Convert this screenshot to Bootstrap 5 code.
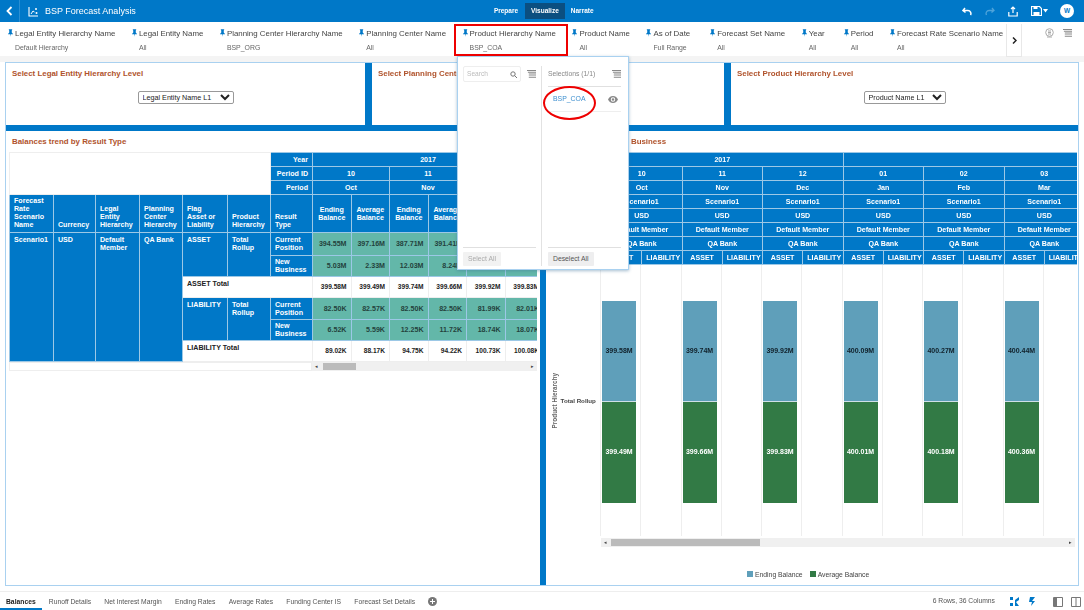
<!DOCTYPE html>
<html lang="en"><head><meta charset="utf-8"><title>BSP Forecast Analysis</title>
<link href="https://cdn.jsdelivr.net/npm/bootstrap@5.3.0/dist/css/bootstrap.min.css" rel="stylesheet">
<script src="https://cdn.jsdelivr.net/npm/bootstrap@5.3.0/dist/js/bootstrap.bundle.min.js"></script>
<style>
html,body{height:610px;overflow:hidden;background:#fff;font-family:"Liberation Sans",Arial,sans-serif;color:#444}
.app{width:1084px;height:610px;position:relative;overflow:hidden;filter:blur(.35px)}
.topbar{height:22px;background:#0078c8;color:#fff;font-size:9px}
.back{width:20px;border-right:1px solid #2a8fd3;height:22px}
.apptitle{margin-left:6px;padding-top:1px}
.mode{font-size:6.5px;font-weight:bold;padding:3px 2px;line-height:10px;color:#fff;white-space:nowrap}
.mode.on{background:#0b4f80;padding:3px 6px;margin:0 4px 0 5px}
.modes{margin-left:356px}
.tb13{margin-left:13px}.tb1{margin-left:1px}.tb12{margin-left:12px;margin-right:10px}
.avatar{width:14px;height:14px;border-radius:50%;background:#fff;color:#0078c8;font-size:6.5px;font-weight:bold}
.filterbar{height:34px;background:#fff;padding-left:8px;position:relative}
.fitem{flex:none;padding-top:7px;margin-right:16.5px;position:relative}
.flab{font-size:7.9px;line-height:10px;color:#444;white-space:nowrap;gap:2px}
.fval{font-size:6.9px;line-height:9px;color:#666;margin-top:4px;margin-left:7px;white-space:nowrap}
.pin{width:5px;height:8px;display:block;flex:none}
.m-a{margin-right:20px}.m-b{margin-right:19px}
.redbox{position:absolute;left:-9px;top:2px;width:114px;height:32px;border:2px solid #ee0000;z-index:6}
.morebtn{position:absolute;left:1006px;top:2px;width:16px;height:33px;border:1px solid #e8e8e8;border-width:0 1px 1px 1px;font-weight:bold;background:#fff}
.fltools{position:absolute;left:1045px;top:6px;gap:9px}
.strip{height:6px;background:#f4f4f4}
.canvas{height:524px;width:1074px;margin-left:5px;border:1px solid #a9d1f0;background:#0078c8;display:flex;flex-direction:column;gap:6px}
.toprow{height:62px;display:grid;grid-template-columns:359px 352px 1fr;gap:7px}
.botrow{flex:1;min-height:0;display:grid;grid-template-columns:534px 1fr;gap:6px}
.pane{background:#fff;min-width:0;overflow:hidden}
.ptitle{font-size:7.9px;font-weight:bold;color:#b0532c;line-height:10px;padding:6px 0 0 6px;white-space:nowrap}
.selwrap{margin-top:4px}
.nsel{font-family:"Liberation Sans",Arial,sans-serif;font-size:7.2px;height:13px;width:96px;padding:0;border:1px solid #999;border-radius:2px;background:#fff;color:#222;text-align:left;text-align-last:left}
.nsel.narrow{width:82px}
.lefthold{margin:5px 0 0 3px;width:528px;overflow:hidden}
table.pv{table-layout:fixed;border-collapse:collapse;font-size:7.1px;line-height:8px;font-weight:bold}
table.pv td,table.pv th{border:1px solid #9cc8e6;padding:0 4px;overflow:hidden;font-weight:bold}
.hd{background:#0078c8;color:#fff}
.ta-r{text-align:right}.ta-c{text-align:center}
.vb{vertical-align:bottom;padding-bottom:3px!important}
.vt{vertical-align:top;padding-top:3px!important}
.teal{background:#63b7a9;color:#24423c;text-align:right;vertical-align:middle}
.tot{background:#fff;color:#222;text-align:right;vertical-align:middle;font-size:6.6px;border-color:#eee!important}
.totl{background:#fff;color:#222;vertical-align:top;padding-top:3px!important;border-color:#eee!important}
.blank{background:#fff;border-color:#eee!important}
.r14{height:14px}
.sb{height:9px;background:#f0f0f0;position:relative;font-size:5px;line-height:9px;color:#444}
.sbl{margin:0 0 0 3px;width:528px;display:flex;height:9px}
.sbw{width:303px;border:1px solid #eee;background:#fff}
.thumb{position:absolute;top:1px;height:7px;background:#bbb}
.ar{position:absolute;top:0}
.righthold{position:relative;height:100%}
.rt{margin:5px 0 0 55px;width:476px;overflow:hidden}
.rt table{width:483px}
.chartrow{display:flex;height:271px}
.axis{width:55px;flex:none;position:relative;font-size:6.8px;color:#444;border-right:1px solid #eee}
.ytitle{writing-mode:vertical-rl;transform:rotate(180deg);font-weight:bold;color:#666;font-size:6.4px;white-space:nowrap}
.yval{font-size:6.2px;font-weight:bold;white-space:nowrap;color:#444;margin-left:1px}
.gridc{flex:none;width:40.25px;border-right:1px solid #eee;padding-top:36px}
.barw{width:34px;margin-left:1px}
.seg{height:101px;display:flex;align-items:center;justify-content:center;font-size:7px;font-weight:bold}
.seg.b1{background:#5f9fba;color:#10202a;border-bottom:1px solid #cfe0e8}
.seg.b2{background:#327a45;color:#fff}
.chartclip{display:flex;overflow:hidden;width:476px}
.csb{margin:2px 0 0 55px;width:474px}
.legend{font-size:6.8px;color:#444;margin:23px 0 0 201px;gap:7px}
.sw{width:6px;height:6px;display:inline-block;margin-right:2px}
.sheets{height:19px;margin-top:5px;border-top:1px solid #eee;font-size:6.75px;color:#555;position:relative}
.sheets .tabs{padding-left:6px;gap:13.2px;line-height:19px;white-space:nowrap}
.sheets b{color:#222}
.tabbar{position:absolute;left:0;bottom:0;width:42px;height:2px;background:#0078c8}
.status{position:absolute;right:0;top:0;height:19px;padding-right:3px}
.st15{margin-left:15px}.st9{margin-left:9px}.st18{margin-left:18px}.st8{margin-left:8px}
.popov{position:absolute;left:457px;top:56px;width:172px;height:214px;background:#fff;border:1px solid #a9d1f0;box-shadow:0 1px 3px rgba(60,110,150,.45);z-index:5;display:flex;padding:9px 0 3px}
.pl{width:84px;border-right:1px solid #e2e2e2;padding:0 5px;display:flex;flex-direction:column}
.pr{flex:1;padding:0 7px 0 6px;display:flex;flex-direction:column}
.srch{width:58px;height:16px;border:1px solid #eee;border-radius:2px;font-size:6.6px;color:#bbb;padding:0 3px;line-height:14px}
.ptop{height:20px;padding-bottom:4px;font-size:6.8px;color:#888}
.hrl{height:1px;background:#e0e0e0}
.selrow{height:25px;font-size:6.9px;color:#3d8fcf;border-bottom:1px solid #eee;padding:0 3px 0 5px}
.pbtn{font-size:6.8px;height:14px;line-height:14px;padding:0 5px;border-radius:1px;background:#eeeeef;color:#555;width:max-content}
.pbtn.off{color:#aaa;background:#f2f2f2}
.ring{position:absolute;left:543px;top:86px;width:53px;height:34px;border:2px solid #ee0000;border-radius:50%;z-index:7}
</style></head>
<body>
<svg width="0" height="0" class="position-absolute">
<symbol id="i-pin" viewBox="0 0 6 9"><path fill="#0078c8" d="M1 0h4v1l-.5.5V4L6 5.6V6H3.400L3 9l-.4-3H0v-.4L1.500 4V1.500L1 1z"/></symbol>
<symbol id="i-list" viewBox="0 0 10 10"><path fill="#888" d="M0 0h10v1H0zM1 2h9v1H1zM2 4h8v1H2zM2 6h8v1H2zM2 8h8v1H2z"/></symbol>
<symbol id="i-eye" viewBox="0 0 10 7"><path fill="#888" d="M5 0C2.500 0 .8 1.700 0 3.500 .8 5.300 2.500 7 5 7s4.200-1.700 5-3.500C9.200 1.700 7.500 0 5 0zm0 5.700a2.200 2.200 0 1 1 0-4.400 2.200 2.200 0 0 1 0 4.400z"/><circle cx="5" cy="3.500" r="1.200" fill="#888"/></symbol>
</svg>
<div class="app">
 <div class="topbar d-flex align-items-center">
  <div class="back d-flex align-items-center justify-content-center"><svg width="7" height="10" viewBox="0 0 7 10"><path d="M5.500 1 1.500 5l4 4" fill="none" stroke="#fff" stroke-width="1.800"/></svg></div>
  <svg class="ms-2" width="11" height="11" viewBox="0 0 11 11"><path d="M1 1v9h9" fill="none" stroke="#fff" stroke-width="1.100"/><path d="M3 8l2-3 1.500 1" fill="none" stroke="#fff"/><circle cx="8" cy="3" r="1" fill="#fff"/><circle cx="8.500" cy="7" r="1" fill="#fff"/></svg>
  <span class="apptitle text-nowrap">BSP Forecast Analysis</span>
  <div class="modes d-flex align-items-center"><span class="mode">Prepare</span><span class="mode on">Visualize</span><span class="mode">Narrate</span></div>
  <div class="ms-auto d-flex align-items-center">
   <svg width="10" height="9" viewBox="0 0 10 9"><path d="M3 1 1 3.500 3.500 5.500M1.500 3.500H6a3 3 0 0 1 2.500 4.500" fill="none" stroke="#fff" stroke-width="1.500"/></svg>
   <svg class="tb13" width="10" height="9" viewBox="0 0 10 9"><path d="M7 1l2 2.500L6.500 5.500M8.500 3.500H4A3 3 0 0 0 1.500 8" fill="none" stroke="#4ea3da" stroke-width="1.300"/></svg>
   <svg class="tb13" width="10" height="11" viewBox="0 0 10 11"><path d="M5 7V1.500M3 3l2-2 2 2M.8 6v4h8.400V6" fill="none" stroke="#fff" stroke-width="1.200"/></svg>
   <svg class="tb13" width="11" height="10" viewBox="0 0 11 10"><path d="M.5.500h8l2 2v7H.5z" fill="none" stroke="#fff" stroke-width="1.200"/><path d="M2.500 6h6v3h-6zM2.500 1h4v2h-4z" fill="#fff"/></svg>
   <svg class="tb1" width="5" height="4" viewBox="0 0 5 4"><path d="M0 0h5L2.500 3.500z" fill="#fff"/></svg>
   <span class="avatar d-flex align-items-center justify-content-center tb12">W</span>
  </div>
 </div>
 <div class="filterbar d-flex">
  <div class="fitem"><div class="flab d-flex"><svg class="pin"><use href="#i-pin"/></svg><span>Legal Entity Hierarchy Name</span></div><div class="fval">Default Hierarchy</div></div>
  <div class="fitem"><div class="flab d-flex"><svg class="pin"><use href="#i-pin"/></svg><span>Legal Entity Name</span></div><div class="fval">All</div></div>
  <div class="fitem"><div class="flab d-flex"><svg class="pin"><use href="#i-pin"/></svg><span>Planning Center Hierarchy Name</span></div><div class="fval">BSP_ORG</div></div>
  <div class="fitem"><div class="flab d-flex"><svg class="pin"><use href="#i-pin"/></svg><span>Planning Center Name</span></div><div class="fval">All</div></div>
  <div class="fitem"><div class="redbox"></div><div class="flab d-flex"><svg class="pin"><use href="#i-pin"/></svg><span>Product Hierarchy Name</span></div><div class="fval">BSP_COA</div></div>
  <div class="fitem"><div class="flab d-flex"><svg class="pin"><use href="#i-pin"/></svg><span>Product Name</span></div><div class="fval">All</div></div>
  <div class="fitem m-a"><div class="flab d-flex"><svg class="pin"><use href="#i-pin"/></svg><span>As of Date</span></div><div class="fval">Full Range</div></div>
  <div class="fitem"><div class="flab d-flex"><svg class="pin"><use href="#i-pin"/></svg><span>Forecast Set Name</span></div><div class="fval">All</div></div>
  <div class="fitem m-b"><div class="flab d-flex"><svg class="pin"><use href="#i-pin"/></svg><span>Year</span></div><div class="fval">All</div></div>
  <div class="fitem"><div class="flab d-flex"><svg class="pin"><use href="#i-pin"/></svg><span>Period</span></div><div class="fval">All</div></div>
  <div class="fitem"><div class="flab d-flex"><svg class="pin"><use href="#i-pin"/></svg><span>Forecast Rate Scenario Name</span></div><div class="fval">All</div></div>
  <div class="morebtn d-flex align-items-center justify-content-center"><svg width="5" height="7" viewBox="0 0 5 7"><path d="M1 .5 4 3.500 1 6.500" fill="none" stroke="#222" stroke-width="1.500"/></svg></div>
  <div class="fltools d-flex align-items-center">
   <svg width="9" height="10" viewBox="0 0 9 10"><circle cx="4.500" cy="4.500" r="3.800" fill="none" stroke="#aaa"/><path d="M3 3h3M3 4.500h3M3 6h3M2 9h5" stroke="#aaa" fill="none"/></svg>
   <svg width="9" height="9"><use href="#i-list"/></svg>
  </div>
 </div>
 <div class="strip"></div>
 <div class="canvas">
  <div class="toprow">
   <div class="pane"><div class="ptitle">Select Legal Entity Hierarchy Level</div><div class="selwrap text-center"><select class="nsel"><option>Legal Entity Name L1</option></select></div></div>
   <div class="pane"><div class="ptitle">Select Planning Center Hierarchy Level</div></div>
   <div class="pane"><div class="ptitle">Select Product Hierarchy Level</div><div class="selwrap text-center"><select class="nsel narrow"><option>Product Name L1</option></select></div></div>
  </div>
  <div class="botrow">
   <div class="pane">
    <div class="ptitle">Balances trend by Result Type</div>
    <div class="lefthold">
    <table class="pv" style="width:534px">
     <colgroup><col style="width:44px"><col style="width:42px"><col style="width:44px"><col style="width:43px"><col style="width:45px"><col style="width:43px"><col style="width:42px"><col style="width:38.500px"><col style="width:38.500px"><col style="width:38.500px"><col style="width:38.500px"><col style="width:38.500px"><col style="width:38.500px"></colgroup>
     <tr class="r14"><td class="blank" colspan="6" rowspan="3"></td><td class="hd ta-r">Year</td><td class="hd ta-c" colspan="6">2017</td></tr>
     <tr class="r14"><td class="hd ta-r">Period ID</td><td class="hd ta-c" colspan="2">10</td><td class="hd ta-c" colspan="2">11</td><td class="hd ta-c" colspan="2">12</td></tr>
     <tr class="r14"><td class="hd ta-r">Period</td><td class="hd ta-c" colspan="2">Oct</td><td class="hd ta-c" colspan="2">Nov</td><td class="hd ta-c" colspan="2">Dec</td></tr>
     <tr style="height:38px"><td class="hd vb">Forecast Rate Scenario Name</td><td class="hd vb">Currency</td><td class="hd vb">Legal Entity Hierarchy</td><td class="hd vb">Planning Center Hierarchy</td><td class="hd vb">Flag<br>Asset or<br>Liability</td><td class="hd vb">Product Hierarchy</td><td class="hd vb">Result Type</td><td class="hd ta-c">Ending Balance</td><td class="hd ta-c">Average Balance</td><td class="hd ta-c">Ending Balance</td><td class="hd ta-c">Average Balance</td><td class="hd ta-c">Ending Balance</td><td class="hd ta-c">Average Balance</td></tr>
     <tr style="height:23px"><td class="hd vt" rowspan="6">Scenario1</td><td class="hd vt" rowspan="6">USD</td><td class="hd vt" rowspan="6">Default Member</td><td class="hd vt" rowspan="6">QA Bank</td><td class="hd vt" rowspan="2">ASSET</td><td class="hd vt" rowspan="2">Total Rollup</td><td class="hd">Current Position</td><td class="teal">394.55M</td><td class="teal">397.16M</td><td class="teal">387.71M</td><td class="teal">391.41M</td><td class="teal">399.52M</td><td class="teal">394.57M</td></tr>
     <tr style="height:21px"><td class="hd">New Business</td><td class="teal">5.03M</td><td class="teal">2.33M</td><td class="teal">12.03M</td><td class="teal">8.24M</td><td class="teal">0.40M</td><td class="teal">5.26M</td></tr>
     <tr style="height:21px"><td class="totl" colspan="3">ASSET Total</td><td class="tot">399.58M</td><td class="tot">399.49M</td><td class="tot">399.74M</td><td class="tot">399.66M</td><td class="tot">399.92M</td><td class="tot">399.83M</td></tr>
     <tr style="height:22px"><td class="hd vt" rowspan="2">LIABILITY</td><td class="hd vt" rowspan="2">Total Rollup</td><td class="hd">Current Position</td><td class="teal">82.50K</td><td class="teal">82.57K</td><td class="teal">82.50K</td><td class="teal">82.50K</td><td class="teal">81.99K</td><td class="teal">82.01K</td></tr>
     <tr style="height:21px"><td class="hd">New Business</td><td class="teal">6.52K</td><td class="teal">5.59K</td><td class="teal">12.25K</td><td class="teal">11.72K</td><td class="teal">18.74K</td><td class="teal">18.07K</td></tr>
     <tr style="height:21px"><td class="totl" colspan="3">LIABILITY Total</td><td class="tot">89.02K</td><td class="tot">88.17K</td><td class="tot">94.75K</td><td class="tot">94.22K</td><td class="tot">100.73K</td><td class="tot">100.08K</td></tr>
    </table>
    </div>
    <div class="sbl"><div class="sbw"></div><div class="sb flex-fill"><span class="ar" style="left:3px">◂</span><div class="thumb" style="left:11px;width:33px"></div><span class="ar" style="right:3px">▸</span></div></div>
   </div>
   <div class="pane righthold">
    <div class="ptitle">Balances by Internal Business</div>
    <div class="rt"><table class="pv">
     <colgroup><col span="12" style="width:40.250px"></colgroup>
     <tr class="r14"><td class="hd ta-c" colspan="6">2017</td><td class="hd" colspan="6"></td></tr>
     <tr class="r14"><td class="hd ta-c" colspan="2">10</td><td class="hd ta-c" colspan="2">11</td><td class="hd ta-c" colspan="2">12</td><td class="hd ta-c" colspan="2">01</td><td class="hd ta-c" colspan="2">02</td><td class="hd ta-c" colspan="2">03</td></tr>
     <tr class="r14"><td class="hd ta-c" colspan="2">Oct</td><td class="hd ta-c" colspan="2">Nov</td><td class="hd ta-c" colspan="2">Dec</td><td class="hd ta-c" colspan="2">Jan</td><td class="hd ta-c" colspan="2">Feb</td><td class="hd ta-c" colspan="2">Mar</td></tr>
     <tr class="r14"><td class="hd ta-c" colspan="2">Scenario1</td><td class="hd ta-c" colspan="2">Scenario1</td><td class="hd ta-c" colspan="2">Scenario1</td><td class="hd ta-c" colspan="2">Scenario1</td><td class="hd ta-c" colspan="2">Scenario1</td><td class="hd ta-c" colspan="2">Scenario1</td></tr>
     <tr class="r14"><td class="hd ta-c" colspan="2">USD</td><td class="hd ta-c" colspan="2">USD</td><td class="hd ta-c" colspan="2">USD</td><td class="hd ta-c" colspan="2">USD</td><td class="hd ta-c" colspan="2">USD</td><td class="hd ta-c" colspan="2">USD</td></tr>
     <tr class="r14"><td class="hd ta-c" colspan="2">Default Member</td><td class="hd ta-c" colspan="2">Default Member</td><td class="hd ta-c" colspan="2">Default Member</td><td class="hd ta-c" colspan="2">Default Member</td><td class="hd ta-c" colspan="2">Default Member</td><td class="hd ta-c" colspan="2">Default Member</td></tr>
     <tr class="r14"><td class="hd ta-c" colspan="2">QA Bank</td><td class="hd ta-c" colspan="2">QA Bank</td><td class="hd ta-c" colspan="2">QA Bank</td><td class="hd ta-c" colspan="2">QA Bank</td><td class="hd ta-c" colspan="2">QA Bank</td><td class="hd ta-c" colspan="2">QA Bank</td></tr>
     <tr class="r14"><td class="hd ta-c">ASSET</td><td class="hd ta-c">LIABILITY</td><td class="hd ta-c">ASSET</td><td class="hd ta-c">LIABILITY</td><td class="hd ta-c">ASSET</td><td class="hd ta-c">LIABILITY</td><td class="hd ta-c">ASSET</td><td class="hd ta-c">LIABILITY</td><td class="hd ta-c">ASSET</td><td class="hd ta-c">LIABILITY</td><td class="hd ta-c">ASSET</td><td class="hd ta-c">LIABILITY</td></tr>
    </table></div>
    <div class="chartrow">
     <div class="axis d-flex align-items-center"><span class="ytitle ms-1">Product Hierarchy</span><span class="yval">Total Rollup</span></div>
     <div class="chartclip">
      <div class="gridc"><div class="barw"><div class="seg b1">399.58M</div><div class="seg b2">399.49M</div></div></div><div class="gridc"></div>
      <div class="gridc"><div class="barw"><div class="seg b1">399.74M</div><div class="seg b2">399.66M</div></div></div><div class="gridc"></div>
      <div class="gridc"><div class="barw"><div class="seg b1">399.92M</div><div class="seg b2">399.83M</div></div></div><div class="gridc"></div>
      <div class="gridc"><div class="barw"><div class="seg b1">400.09M</div><div class="seg b2">400.01M</div></div></div><div class="gridc"></div>
      <div class="gridc"><div class="barw"><div class="seg b1">400.27M</div><div class="seg b2">400.18M</div></div></div><div class="gridc"></div>
      <div class="gridc"><div class="barw"><div class="seg b1">400.44M</div><div class="seg b2">400.36M</div></div></div><div class="gridc"></div>
     </div>
    </div>
    <div class="sb csb"><span class="ar" style="left:3px">◂</span><div class="thumb" style="left:10px;width:149px"></div><span class="ar" style="right:3px">▸</span></div>
    <div class="legend d-flex"><span><i class="sw" style="background:#5f9fba"></i>Ending Balance</span><span><i class="sw" style="background:#327a45"></i>Average Balance</span></div>
   </div>
  </div>
 </div>
 <div class="sheets">
  <div class="tabs d-flex"><b>Balances</b><span>Runoff Details</span><span>Net Interest Margin</span><span>Ending Rates</span><span>Average Rates</span><span>Funding Center IS</span><span>Forecast Set Details</span>
   <svg class="align-self-center" width="9" height="9" viewBox="0 0 9 9"><circle cx="4.500" cy="4.500" r="4.500" fill="#777"/><path d="M4.500 2v5M2 4.500h5" stroke="#fff"/></svg></div>
  <div class="tabbar"></div>
  <div class="status d-flex align-items-center">
   <span class="text-nowrap">6 Rows, 36 Columns</span>
   <svg class="st15" width="10" height="9" viewBox="0 0 10 9"><path d="M0 0h3v3H0zM0 6h3v3H0zM5 3l4-3v3L6 5l3 4H5z" fill="#0078c8"/></svg>
   <svg class="st9" width="6" height="9" viewBox="0 0 6 9"><path d="M1 0h5L3 4h3L2 9l1-4H0z" fill="#0078c8"/></svg>
   <svg class="st18" width="10" height="10" viewBox="0 0 10 10"><path d="M.5.500h9v9h-9z" fill="none" stroke="#777"/><path d="M1 1h3v8H1z" fill="#777"/></svg>
   <svg class="st8" width="10" height="10" viewBox="0 0 10 10"><path d="M.5.500h9v9h-9zM5 .500v9" fill="none" stroke="#777"/></svg>
  </div>
 </div>
 <div class="popov">
  <div class="pl">
   <div class="d-flex align-items-start justify-content-between"><div class="srch d-flex justify-content-between align-items-center"><span>Search</span><svg width="7" height="7" viewBox="0 0 7 7"><circle cx="3" cy="3" r="2.200" fill="none" stroke="#777"/><path d="M4.500 4.500 7 7" stroke="#777"/></svg></div><svg class="mt-1" width="9" height="9"><use href="#i-list"/></svg></div>
   <div class="hrl mt-auto mb-1"></div>
   <div class="pbtn off">Select All</div>
  </div>
  <div class="pr">
   <div class="ptop d-flex justify-content-between align-items-center"><span>Selections (1/1)</span><svg width="9" height="9"><use href="#i-list"/></svg></div>
   <div class="hrl"></div>
   <div class="selrow d-flex align-items-center justify-content-between"><span>BSP_COA</span><svg width="10" height="7"><use href="#i-eye"/></svg></div>
   <div class="hrl mt-auto mb-1"></div>
   <div class="pbtn">Deselect All</div>
  </div>
 </div>
 <div class="ring"></div>
</div>
</body></html>
